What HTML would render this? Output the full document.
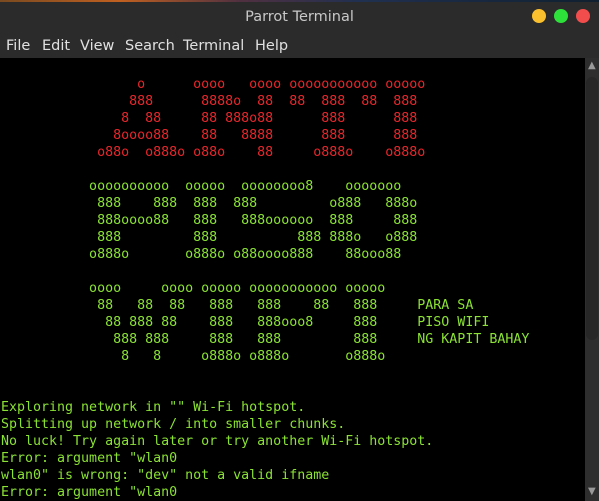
<!DOCTYPE html>
<html><head><style>
body{margin:0;width:599px;height:501px;overflow:hidden;background:#2b2b2b;font-family:"DejaVu Sans","Liberation Sans",sans-serif;position:relative}
.strip{position:absolute;left:0;top:0;width:599px;height:2px;background:linear-gradient(90deg,#7a4a20,#c06020 20%,#503040 40%,#203050 60%,#102030 100%)}
.title{position:absolute;top:9px;left:0;width:599px;text-align:center;color:#c8c8c8;font-size:14.5px}
.dot{position:absolute;top:9px;width:14px;height:14px;border-radius:50%}
.menu span{position:absolute;top:38px;color:#e0e0e0;font-size:14.5px}
.term{position:absolute;left:0;top:58px;width:585px;height:443px;background:#000;overflow:hidden}
pre{margin:0;padding:1px 0 0 1px;font-family:"DejaVu Sans Mono","Liberation Mono",monospace;font-size:13.3px;line-height:17px;color:#8ae234;letter-spacing:0}
.r{color:#e8262b}
.sb{position:absolute;left:585px;top:58px;width:14px;height:443px;background:#2e2e2e}
.thumb{position:absolute;left:586px;top:77px;width:12px;height:263px;background:#272727;border-radius:6px}
.arr{position:absolute;left:588px;color:#999;font-size:10px}
</style></head><body>
<div class="strip"></div>
<div class="title">Parrot Terminal</div>
<div class="dot" style="left:532px;background:#fbc02d"></div>
<div class="dot" style="left:554px;background:#2ee03a"></div>
<div class="dot" style="left:576px;background:#f24d4d"></div>
<div class="menu"><span style="left:6px">File</span><span style="left:42px">Edit</span><span style="left:80px">View</span><span style="left:125px">Search</span><span style="left:183px">Terminal</span><span style="left:255px">Help</span></div>
<div class="term"><pre>

<span class="r">                 o      oooo   oooo ooooooooooo ooooo
                888      8888o  88  88  888  88  888
               8  88     88 888o88      888      888
              8oooo88    88   8888      888      888
            o88o  o888o o88o    88     o888o    o888o</span>

           oooooooooo  ooooo  oooooooo8    ooooooo
            888    888  888  888         o888   888o
            888oooo88   888   888oooooo  888     888
            888         888          888 888o   o888
           o888o       o888o o88oooo888    88ooo88

           oooo     oooo ooooo ooooooooooo ooooo
            88   88  88   888   888    88   888     PARA SA
             88 888 88    888   888ooo8     888     PISO WIFI
              888 888     888   888         888     NG KAPIT BAHAY
               8   8     o888o o888o       o888o


Exploring network in "" Wi-Fi hotspot.
Splitting up network / into smaller chunks.
No luck! Try again later or try another Wi-Fi hotspot.
Error: argument "wlan0
wlan0" is wrong: "dev" not a valid ifname
Error: argument "wlan0
</pre></div>
<div class="sb"></div>
<div class="thumb"></div>
<div class="arr" style="top:60px">&#9650;</div>
<div class="arr" style="top:486px">&#9660;</div>
</body></html>
